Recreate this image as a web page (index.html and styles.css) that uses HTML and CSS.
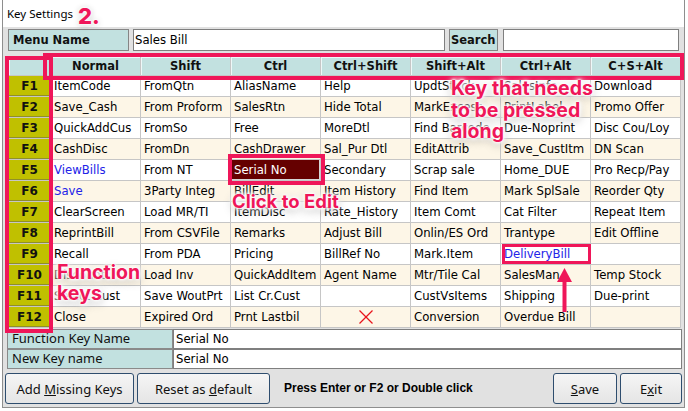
FILE: index.html
```html
<!DOCTYPE html>
<html>
<head>
<meta charset="utf-8">
<title>Key Settings</title>
<link rel="stylesheet" href="styles.css">
</head>
<body>
<div class="page">
  <div class="window">
    <div class="title">Key Settings</div>
    <div class="body">
      <div class="toprow">
        <div class="lbl menu">Menu Name</div>
        <div class="inp menuinp">Sales Bill</div>
        <div class="lbl search">Search</div>
        <div class="inp searchinp"></div>
      </div>

      <div class="grid">
        <div class="row">
          <div class="h"></div><div class="h">Normal</div><div class="h">Shift</div><div class="h">Ctrl</div><div class="h">Ctrl+Shift</div><div class="h">Shift+Alt</div><div class="h">Ctrl+Alt</div><div class="h">C+S+Alt</div>
        </div>
        <div class="row">
          <div class="k">F1</div><div class="c">ItemCode</div><div class="c">FromQtn</div><div class="c">AliasName</div><div class="c">Help</div><div class="c">UpdtStock</div><div class="c">SalesInfo</div><div class="c">Download</div>
        </div>
        <div class="row alt">
          <div class="k">F2</div><div class="c">Save_Cash</div><div class="c">From Proform</div><div class="c">SalesRtn</div><div class="c">Hide Total</div><div class="c">MarkExcess</div><div class="c">PrintLabel</div><div class="c">Promo Offer</div>
        </div>
        <div class="row">
          <div class="k">F3</div><div class="c">QuickAddCus</div><div class="c">FromSo</div><div class="c">Free</div><div class="c">MoreDtl</div><div class="c">Find Barcode</div><div class="c">Due-Noprint</div><div class="c">Disc Cou/Loy</div>
        </div>
        <div class="row alt">
          <div class="k">F4</div><div class="c">CashDisc</div><div class="c">FromDn</div><div class="c">CashDrawer</div><div class="c">Sal_Pur Dtl</div><div class="c">EditAttrib</div><div class="c">Save_CustItm</div><div class="c">DN Scan</div>
        </div>
        <div class="row">
          <div class="k">F5</div><div class="c blue">ViewBills</div><div class="c">From NT</div><div class="c sel">Serial No</div><div class="c">Secondary</div><div class="c">Scrap sale</div><div class="c">Home_DUE</div><div class="c">Pro Recp/Pay</div>
        </div>
        <div class="row alt">
          <div class="k">F6</div><div class="c blue">Save</div><div class="c">3Party Integ</div><div class="c">BillEdit</div><div class="c">Item History</div><div class="c">Find Item</div><div class="c">Mark SplSale</div><div class="c">Reorder Qty</div>
        </div>
        <div class="row">
          <div class="k">F7</div><div class="c">ClearScreen</div><div class="c">Load MR/TI</div><div class="c">ItemDisc</div><div class="c">Rate_History</div><div class="c">Item Comt</div><div class="c">Cat Filter</div><div class="c">Repeat Item</div>
        </div>
        <div class="row alt">
          <div class="k">F8</div><div class="c">ReprintBill</div><div class="c">From CSVFile</div><div class="c">Remarks</div><div class="c">Adjust Bill</div><div class="c">Onlin/ES Ord</div><div class="c">Trantype</div><div class="c">Edit Offline</div>
        </div>
        <div class="row">
          <div class="k">F9</div><div class="c">Recall</div><div class="c">From PDA</div><div class="c">Pricing</div><div class="c">BillRef No</div><div class="c">Mark.Item</div><div class="c blue">DeliveryBill</div><div class="c"></div>
        </div>
        <div class="row alt">
          <div class="k">F10</div><div class="c">Discount</div><div class="c">Load Inv</div><div class="c">QuickAddItem</div><div class="c">Agent Name</div><div class="c">Mtr/Tile Cal</div><div class="c">SalesMan</div><div class="c">Temp Stock</div>
        </div>
        <div class="row">
          <div class="k">F11</div><div class="c">Select Cust</div><div class="c">Save WoutPrt</div><div class="c">List Cr.Cust</div><div class="c"></div><div class="c">CustVsItems</div><div class="c">Shipping</div><div class="c">Due-print</div>
        </div>
        <div class="row alt">
          <div class="k">F12</div><div class="c">Close</div><div class="c">Expired Ord</div><div class="c">Prnt Lastbil</div><div class="c xcell"><svg class="xmark" width="16" height="16" viewBox="0 0 16 16"><line x1="1.5" y1="1.5" x2="14.5" y2="14.5"/><line x1="14.5" y1="1.5" x2="1.5" y2="14.5"/></svg></div><div class="c">Conversion</div><div class="c">Overdue Bill</div><div class="c"></div>
        </div>
      </div>

      <div class="fields">
        <div class="frow"><div class="flbl">Function Key Name</div><div class="finp">Serial No</div></div>
        <div class="frow"><div class="flbl">New Key name</div><div class="finp">Serial No</div></div>
      </div>

      <div class="buttons">
        <button class="btn b-add">Add <u>M</u>issing Keys</button>
        <button class="btn b-reset">Reset as <u>d</u>efault</button>
        <span class="hint">Press Enter or F2 or Double click</span>
        <button class="btn b-save"><u>S</u>ave</button>
        <button class="btn b-exit">E<u>x</u>it</button>
      </div>
    </div>
  </div>

  <div class="step">2.</div>
  <div class="mark m-head"></div>
  <div class="mark m-keys"></div>
  <div class="mark m-serial"></div>
  <div class="mark m-deliv"></div>
  <svg class="arrow" width="19" height="48" viewBox="0 0 19 48"><polygon points="9.5,2 2,16 17,16"/><rect x="7.5" y="14" width="4" height="32"/></svg>
  <div class="note n-keys">Key that needs<br>to be pressed<br>along</div>
  <div class="note n-edit">Click to Edit</div>
  <div class="note n-func">Function<br>keys</div>
</div>
</body>
</html>
```

FILE: styles.css
```css
* { box-sizing: border-box; }
html, body { margin: 0; padding: 0; background: #ffffff; }

.page {
  position: relative;
  width: 688px;
  height: 411px;
  overflow: hidden;
}

.window {
  margin-left: 2px;
  width: 683px;
  height: 408px;
  border: 1px solid #8e8e8e;
  border-top: 0;
  display: flex;
  flex-direction: column;
}

.title {
  height: 27px;
  flex: 0 0 27px;
  background: #ffffff;
  font-family: "Noto Sans", sans-serif;
  font-size: 11.5px;
  color: #000;
  padding-left: 4px;
  display: flex;
  align-items: center;
}

.body {
  flex: 1;
  background: #e1e1e1;
  padding-top: 2px;
}

/* top row */
.toprow {
  display: flex;
  height: 22px;
  margin-left: 5px;
}
.lbl {
  background: #c2e1e0;
  border: 1px solid #858585;
  font-family: "DejaVu Sans", sans-serif;
  font-weight: bold;
  font-size: 11.5px;
  color: #111;
  display: flex;
  align-items: center;
  padding-left: 4px;
}
.menu { width: 121px; margin-right: 4px; }
.search { width: 49px; margin-right: 5px; padding-left: 1px; }
.inp {
  background: #ffffff;
  border: 1px solid #7f7f7f;
  font-family: "DejaVu Sans", sans-serif;
  font-size: 11.7px;
  color: #000;
  padding-left: 1px;
  display: flex;
  align-items: center;
}
.menuinp { width: 312px; margin-right: 4px; }
.searchinp { width: 176px; }

/* grid */
.grid {
  margin: 5px 0 0 5px;
  width: 673px;
  display: grid;
  grid-template-columns: 41px repeat(7, 89px);
  grid-template-rows: 18px repeat(12, 20px);
  gap: 1px;
  padding: 1px;
  background: #c6c6c6;
}
.row { display: contents; }
.h {
  background: #c2e1e0;
  font-family: "DejaVu Sans", sans-serif;
  font-weight: bold;
  font-size: 11.5px;
  color: #111;
  text-align: center;
  line-height: 18px;
  box-shadow: inset 1px 1px #eef8f8;
}
.k {
  background: #c0c000;
  font-family: "DejaVu Sans", sans-serif;
  font-weight: bold;
  font-size: 12px;
  color: #111;
  text-align: center;
  line-height: 20px;
  box-shadow: inset 0 -1px #8f8f2a;
}
.c {
  background: #ffffff;
  font-family: "DejaVu Sans", sans-serif;
  font-size: 11.7px;
  color: #000;
  line-height: 20px;
  padding-left: 3px;
  white-space: nowrap;
  overflow: hidden;
}
.alt > .c { background: #fdf6e7; }
.c.blue { color: #2323e8; }
.row > .c.sel {
  background: #650000;
  color: #ffffff;
  box-shadow: inset -1px -1px #d6d6d6;
}
.xcell { display: flex; align-items: center; justify-content: center; padding-left: 0; }
.xmark { stroke: #e8141c; stroke-width: 1.3; }

/* fields */
.fields { margin: 1px 0 0 4px; }
.frow { display: flex; height: 20px; }
.flbl {
  width: 166px;
  background: #c2e1e0;
  border: 1px solid #8a8a8a;
  font-family: "Noto Sans", sans-serif;
  font-size: 13px;
  color: #111;
  padding-left: 4px;
  line-height: 17px;
}
.finp {
  width: 509px;
  background: #ffffff;
  border: 1px solid #7f7f7f;
  font-family: "DejaVu Sans", sans-serif;
  font-size: 11.7px;
  color: #000;
  padding-left: 2px;
  line-height: 18px;
}

/* buttons */
.buttons {
  display: flex;
  align-items: center;
  height: 31px;
  margin: 4px 2px 0 2px;
}
.btn {
  height: 31px;
  border: 1px solid #2e4d6e;
  border-radius: 3px;
  background: linear-gradient(#f5f5f5, #e5e5e5);
  font-family: "Noto Sans", sans-serif;
  font-size: 13px;
  color: #111;
  padding: 0;
  margin: 0;
}
.b-add { width: 129px; }
.b-reset { width: 133px; margin-left: 3px; }
.hint {
  margin-left: 14px;
  font-family: "Liberation Sans", sans-serif;
  font-weight: bold;
  font-size: 12px;
  color: #000;
  margin-top: -1px;
}
.b-save { width: 64px; margin-left: auto; }
.b-exit { width: 62px; margin-left: 3px; }

/* annotations */
.mark {
  position: absolute;
  border: 4px solid #ef1659;
}
.m-head { left: 43px; top: 53px; width: 641px; height: 27px; }
.m-keys { left: 5px; top: 56px; width: 48px; height: 277px; }
.m-serial { left: 228px; top: 154px; width: 97px; height: 31px; }
.m-deliv { left: 502px; top: 244px; width: 89px; height: 20px; border-width: 3px; }

.arrow { position: absolute; left: 555px; top: 266px; fill: #ef1659; }

.step {
  position: absolute;
  left: 78px;
  top: 5px;
  font-family: Inter, sans-serif;
  font-weight: 800;
  font-size: 22px;
  line-height: 22px;
  color: #ef1659;
  text-shadow: 0 0 2px #fff, 0 0 3px #fff, 0 0 4px #fff, 0 1px 6px rgba(0,0,0,0.3);
}
.note {
  position: absolute;
  font-family: Inter, sans-serif;
  font-weight: 700;
  color: #ef1659;
  white-space: nowrap;
  text-shadow:
    0 0 1px #fff, 0 0 2px #fff, 0 0 3px #fff, 0 0 4px #fff,
    0 0 6px #fff, 0 0 8px rgba(255,255,255,0.95),
    0 3px 10px rgba(0,0,0,0.35);
}
.n-keys { left: 451px; top: 78px; font-size: 19.5px; line-height: 21.5px; }
.n-edit { left: 232px; top: 191px; font-size: 18.5px; line-height: 21px; }
.n-func { left: 57px; top: 262px; font-size: 19.5px; line-height: 21px; }
```
